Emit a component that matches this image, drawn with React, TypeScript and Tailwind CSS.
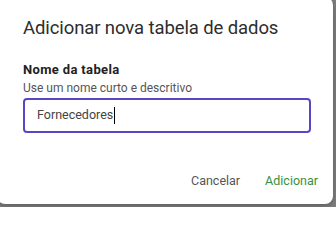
export default function App() {
  return (
    <div className="h-[207px] w-[336px] overflow-hidden bg-[#808080] font-['Roboto',sans-serif]">
      <div className="-ml-[3px] -mt-[3px] h-[207px] w-[336px] rounded-lg bg-white pl-[26px] pr-[15px] pt-[19px] shadow-[0_2px_6px_rgba(0,0,0,0.3)]">
        <h2 className="text-[18.5px] leading-[24px] tracking-[-0.1px] text-[#2d2d2d]">
          Adicionar nova tabela de dados
        </h2>

        <div className="mt-[22px]">
          <label className="block text-[13px] font-bold leading-[16px] tracking-[0.35px] text-[#222]">
            Nome da tabela
          </label>
          <p className="mt-[3px] text-[12px] leading-[14px] text-[#555]">
            Use um nome curto e descritivo
          </p>
          <div className="mt-[3px] flex h-[35px] w-[288px] items-center rounded-[4px] border-2 border-[#5847c4] px-[12px]">
            <span className="text-[12.5px] text-[#444]">Fornecedores</span>
            <span className="ml-px h-[17px] w-px bg-black" />
          </div>
        </div>

        <div className="mt-[40px] flex justify-end gap-[25px]">
          <button className="text-[12.5px] leading-[16px] text-[#555]">Cancelar</button>
          <button className="text-[12.5px] leading-[16px] text-[#3b8e3f]">Adicionar</button>
        </div>
      </div>
    </div>
  );
}
